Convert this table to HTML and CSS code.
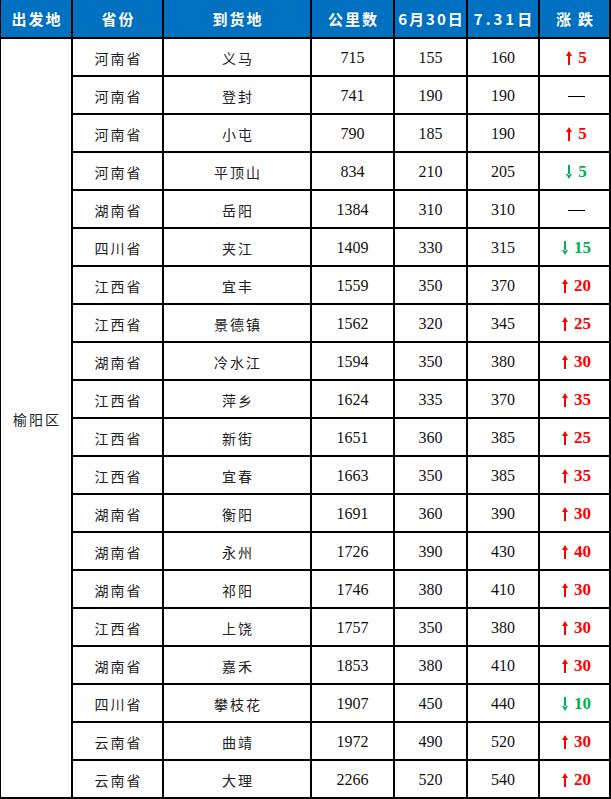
FILE: index.html
```html
<!DOCTYPE html>
<html lang="zh">
<head>
<meta charset="utf-8">
<title>运价表</title>
<link rel="stylesheet" href="styles.css">
</head>
<body>
<div class="sheet">
  <div class="hd">出发地</div>
  <div class="hd">省份</div>
  <div class="hd">到货地</div>
  <div class="hd">公里数</div>
  <div class="hd">6月30日</div>
  <div class="hd date">7.31日</div>
  <div class="hd wide">涨跌</div>

  <div class="origin">榆阳区</div>

  <div class="c zh">河南省</div><div class="c zh">义马</div><div class="c num">715</div><div class="c num">155</div><div class="c num">160</div><div class="c chg up"><svg class="arr" viewBox="0 0 6 14"><path d="M0 5 L3 0 L6 5 Z M2 4 H4 V14 H2 Z"/></svg><b>5</b></div>
  <div class="c zh">河南省</div><div class="c zh">登封</div><div class="c num">741</div><div class="c num">190</div><div class="c num">190</div><div class="c chg"><span class="dash"></span></div>
  <div class="c zh">河南省</div><div class="c zh">小屯</div><div class="c num">790</div><div class="c num">185</div><div class="c num">190</div><div class="c chg up"><svg class="arr" viewBox="0 0 6 14"><path d="M0 5 L3 0 L6 5 Z M2 4 H4 V14 H2 Z"/></svg><b>5</b></div>
  <div class="c zh">河南省</div><div class="c zh">平顶山</div><div class="c num">834</div><div class="c num">210</div><div class="c num">205</div><div class="c chg down"><svg class="arr" viewBox="0 0 6 14"><path d="M0 9 L3 14 L6 9 Z M2 0 H4 V10 H2 Z"/></svg><b>5</b></div>
  <div class="c zh">湖南省</div><div class="c zh">岳阳</div><div class="c num">1384</div><div class="c num">310</div><div class="c num">310</div><div class="c chg"><span class="dash"></span></div>
  <div class="c zh">四川省</div><div class="c zh">夹江</div><div class="c num">1409</div><div class="c num">330</div><div class="c num">315</div><div class="c chg down"><svg class="arr" viewBox="0 0 6 14"><path d="M0 9 L3 14 L6 9 Z M2 0 H4 V10 H2 Z"/></svg><b>15</b></div>
  <div class="c zh">江西省</div><div class="c zh">宜丰</div><div class="c num">1559</div><div class="c num">350</div><div class="c num">370</div><div class="c chg up"><svg class="arr" viewBox="0 0 6 14"><path d="M0 5 L3 0 L6 5 Z M2 4 H4 V14 H2 Z"/></svg><b>20</b></div>
  <div class="c zh">江西省</div><div class="c zh">景德镇</div><div class="c num">1562</div><div class="c num">320</div><div class="c num">345</div><div class="c chg up"><svg class="arr" viewBox="0 0 6 14"><path d="M0 5 L3 0 L6 5 Z M2 4 H4 V14 H2 Z"/></svg><b>25</b></div>
  <div class="c zh">湖南省</div><div class="c zh">冷水江</div><div class="c num">1594</div><div class="c num">350</div><div class="c num">380</div><div class="c chg up"><svg class="arr" viewBox="0 0 6 14"><path d="M0 5 L3 0 L6 5 Z M2 4 H4 V14 H2 Z"/></svg><b>30</b></div>
  <div class="c zh">江西省</div><div class="c zh">萍乡</div><div class="c num">1624</div><div class="c num">335</div><div class="c num">370</div><div class="c chg up"><svg class="arr" viewBox="0 0 6 14"><path d="M0 5 L3 0 L6 5 Z M2 4 H4 V14 H2 Z"/></svg><b>35</b></div>
  <div class="c zh">江西省</div><div class="c zh">新街</div><div class="c num">1651</div><div class="c num">360</div><div class="c num">385</div><div class="c chg up"><svg class="arr" viewBox="0 0 6 14"><path d="M0 5 L3 0 L6 5 Z M2 4 H4 V14 H2 Z"/></svg><b>25</b></div>
  <div class="c zh">江西省</div><div class="c zh">宜春</div><div class="c num">1663</div><div class="c num">350</div><div class="c num">385</div><div class="c chg up"><svg class="arr" viewBox="0 0 6 14"><path d="M0 5 L3 0 L6 5 Z M2 4 H4 V14 H2 Z"/></svg><b>35</b></div>
  <div class="c zh">湖南省</div><div class="c zh">衡阳</div><div class="c num">1691</div><div class="c num">360</div><div class="c num">390</div><div class="c chg up"><svg class="arr" viewBox="0 0 6 14"><path d="M0 5 L3 0 L6 5 Z M2 4 H4 V14 H2 Z"/></svg><b>30</b></div>
  <div class="c zh">湖南省</div><div class="c zh">永州</div><div class="c num">1726</div><div class="c num">390</div><div class="c num">430</div><div class="c chg up"><svg class="arr" viewBox="0 0 6 14"><path d="M0 5 L3 0 L6 5 Z M2 4 H4 V14 H2 Z"/></svg><b>40</b></div>
  <div class="c zh">湖南省</div><div class="c zh">祁阳</div><div class="c num">1746</div><div class="c num">380</div><div class="c num">410</div><div class="c chg up"><svg class="arr" viewBox="0 0 6 14"><path d="M0 5 L3 0 L6 5 Z M2 4 H4 V14 H2 Z"/></svg><b>30</b></div>
  <div class="c zh">江西省</div><div class="c zh">上饶</div><div class="c num">1757</div><div class="c num">350</div><div class="c num">380</div><div class="c chg up"><svg class="arr" viewBox="0 0 6 14"><path d="M0 5 L3 0 L6 5 Z M2 4 H4 V14 H2 Z"/></svg><b>30</b></div>
  <div class="c zh">湖南省</div><div class="c zh">嘉禾</div><div class="c num">1853</div><div class="c num">380</div><div class="c num">410</div><div class="c chg up"><svg class="arr" viewBox="0 0 6 14"><path d="M0 5 L3 0 L6 5 Z M2 4 H4 V14 H2 Z"/></svg><b>30</b></div>
  <div class="c zh">四川省</div><div class="c zh">攀枝花</div><div class="c num">1907</div><div class="c num">450</div><div class="c num">440</div><div class="c chg down"><svg class="arr" viewBox="0 0 6 14"><path d="M0 9 L3 14 L6 9 Z M2 0 H4 V10 H2 Z"/></svg><b>10</b></div>
  <div class="c zh">云南省</div><div class="c zh">曲靖</div><div class="c num">1972</div><div class="c num">490</div><div class="c num">520</div><div class="c chg up"><svg class="arr" viewBox="0 0 6 14"><path d="M0 5 L3 0 L6 5 Z M2 4 H4 V14 H2 Z"/></svg><b>30</b></div>
  <div class="c zh">云南省</div><div class="c zh">大理</div><div class="c num">2266</div><div class="c num">520</div><div class="c num">540</div><div class="c chg up"><svg class="arr" viewBox="0 0 6 14"><path d="M0 5 L3 0 L6 5 Z M2 4 H4 V14 H2 Z"/></svg><b>20</b></div>
</div>
</body>
</html>
```

FILE: styles.css
```css
html, body {
  margin: 0;
  padding: 0;
  background: #ffffff;
}

.sheet {
  width: 611px;
  box-sizing: border-box;
  display: grid;
  grid-template-columns: 70px 89px 146px 81px 71px 70px 69px;
  grid-template-rows: 37px repeat(20, 36px);
  gap: 2px;
  padding: 0 2px 2px 1px;
  background: #000000;
}

.hd {
  background: #0070c0;
  color: #ffffff;
  font-family: "Noto Sans CJK SC", "Liberation Sans", sans-serif;
  font-weight: 700;
  font-size: 15px;
  letter-spacing: 2px;
  white-space: nowrap;
  display: flex;
  align-items: center;
  justify-content: center;
  padding-left: 2px;
}

.hd.date {
  letter-spacing: 3px;
  padding-left: 3px;
}

.hd.wide {
  letter-spacing: 7px;
  padding-left: 7px;
}

.origin {
  grid-column: 1;
  grid-row: 2 / span 20;
  background: #ffffff;
  color: #222222;
  font-family: "Noto Sans CJK SC", sans-serif;
  font-size: 14px;
  letter-spacing: 2px;
  padding: 2px 0 0 2px;
  display: flex;
  align-items: center;
  justify-content: center;
}

.c {
  background: #ffffff;
  display: flex;
  align-items: center;
  justify-content: center;
  color: #222222;
  padding-top: 2px;
  white-space: nowrap;
}

.zh {
  font-family: "Noto Sans CJK SC", sans-serif;
  font-size: 14px;
  letter-spacing: 2px;
  padding-left: 2px;
}

.num {
  font-family: "Liberation Serif", serif;
  font-size: 16px;
  color: #111111;
}

.chg {
  font-family: "Liberation Serif", serif;
  font-size: 17px;
  gap: 6px;
  padding-left: 4px;
}

.chg b {
  font-weight: 700;
}

.arr {
  width: 6px;
  height: 14px;
  fill: currentColor;
}

.up {
  color: #ff0000;
}

.down {
  color: #00b050;
}

.dash {
  display: block;
  width: 17px;
  height: 1px;
  background: #000000;
}
```
